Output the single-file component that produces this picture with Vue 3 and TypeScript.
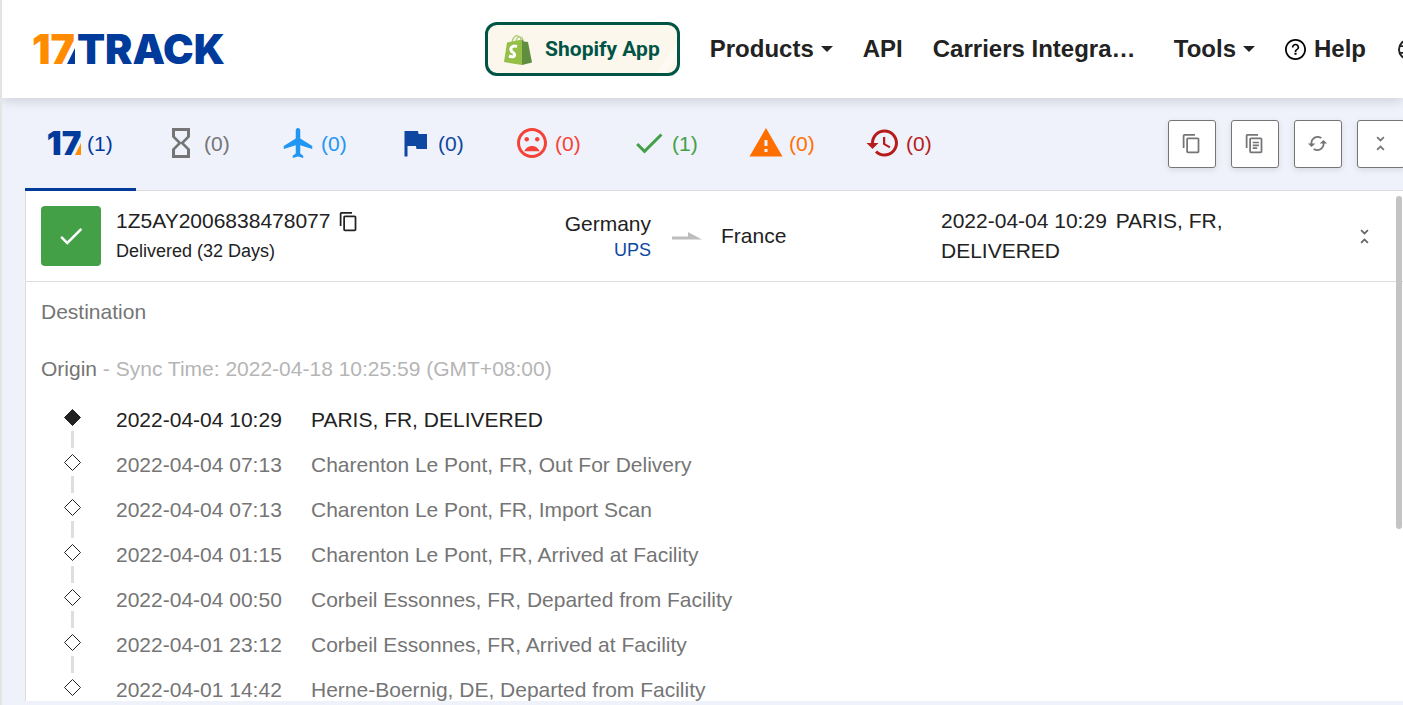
<script setup lang="ts">
interface Tab {
  label: string
  count: number
  color: string
  path?: string
}

interface TrackEvent {
  time: string
  text: string
}

const tabs: Tab[] = [
  { label: 'All', count: 1, color: 'navy' },
  { label: 'Not found', count: 0, color: 'grey', path: 'M6 2v6h.01L6 8.01 10 12l-4 4 .01.01H6V22h12v-5.99h-.01L18 16l-4-4 4-3.99-.01-.01H18V2H6zm10 14.5V20H8v-3.5l4-4 4 4zm-4-5-4-4V4h8v3.500l-4 4z' },
  { label: 'In transit', count: 0, color: 'sky', path: 'M21.500 16v-2l-8-5V3.500c0-.83-.67-1.500-1.500-1.500s-1.500.67-1.500 1.500V9l-8 5v2l8-2.500V19l-2 1.500V22l3.500-1 3.500 1v-1.500L13.500 19v-5.500l8 2.500z' },
  { label: 'Pick up', count: 0, color: 'blue', path: 'M14.400 6 14 4H5v17h2v-7h5.600l.4 2h7V6z' },
  { label: 'Undelivered', count: 0, color: 'red', path: 'M11.990 2C6.470 2 2 6.480 2 12s4.470 10 9.990 10C17.520 22 22 17.520 22 12S17.520 2 11.990 2zM12 20c-4.420 0-8-3.580-8-8s3.580-8 8-8 8 3.580 8 8-3.580 8-8 8zm3.500-9c.83 0 1.500-.67 1.500-1.500S16.330 8 15.500 8 14 8.670 14 9.500s.67 1.500 1.500 1.500zm-7 0c.83 0 1.500-.67 1.500-1.500S9.330 8 8.500 8 7 8.670 7 9.500 7.670 11 8.500 11zm3.500 3c-2.330 0-4.310 1.460-5.110 3.500h10.220c-.8-2.040-2.780-3.500-5.110-3.500z' },
  { label: 'Delivered', count: 1, color: 'green', path: 'M9 16.170 4.830 12l-1.420 1.410L9 19 21 7l-1.410-1.410z' },
  { label: 'Alert', count: 0, color: 'orange', path: 'M1 21h22L12 2 1 21zm12-3h-2v-2h2v2zm0-4h-2v-4h2v4z' },
  { label: 'Expired', count: 0, color: 'crimson', path: 'M13 3c-4.970 0-9 4.030-9 9H1l3.890 3.890.07.14L9 12H6c0-3.870 3.130-7 7-7s7 3.130 7 7-3.130 7-7 7c-1.930 0-3.680-.79-4.940-2.060l-1.420 1.420C8.270 19.990 10.510 21 13 21c4.970 0 9-4.030 9-9s-4.030-9-9-9zm-1 5v5l4.280 2.540.72-1.210-3.500-2.080V8H12z' },
]

const copyPath = 'M16 1H4c-1.1 0-2 .9-2 2v14h2V3h12V1zm3 4H8c-1.1 0-2 .9-2 2v14c0 1.1.9 2 2 2h11c1.1 0 2-.9 2-2V7c0-1.1-.9-2-2-2zm0 16H8V7h11v14z'
const foldPath = 'M7.41 18.59 8.83 20 12 16.83 15.17 20l1.41-1.41L12 14l-4.59 4.59zm9.18-13.18L15.17 4 12 7.170 8.830 4 7.410 5.410 12 10l4.590-4.590z'

const tools = [
  { label: 'Copy numbers', path: copyPath },
  { label: 'Copy details', path: copyPath + 'M10 10h7v1.800h-7zM10 13.200h7v1.800h-7zM10 16.400h5v1.800h-5z' },
  { label: 'Refresh', path: 'M12 3.500c1.900 0 3.600.6 5 1.700l-1.500 1.500A6 6 0 0 0 6.100 12H9.500L5.200 16 1 12h3C4 7.300 7.600 3.500 12 3.500zM18.800 8l4.200 4h-3c0 4.700-3.600 8.500-8 8.500-1.900 0-3.600-.6-5-1.700l1.500-1.500A6 6 0 0 0 17.900 12h-3.400z' },
  { label: 'Collapse all', path: foldPath },
]

const events: TrackEvent[] = [
  { time: '2022-04-04 10:29', text: 'PARIS, FR, DELIVERED' },
  { time: '2022-04-04 07:13', text: 'Charenton Le Pont, FR, Out For Delivery' },
  { time: '2022-04-04 07:13', text: 'Charenton Le Pont, FR, Import Scan' },
  { time: '2022-04-04 01:15', text: 'Charenton Le Pont, FR, Arrived at Facility' },
  { time: '2022-04-04 00:50', text: 'Corbeil Essonnes, FR, Departed from Facility' },
  { time: '2022-04-01 23:12', text: 'Corbeil Essonnes, FR, Arrived at Facility' },
  { time: '2022-04-01 14:42', text: 'Herne-Boernig, DE, Departed from Facility' },
]
</script>

<template>
  <div class="app">
    <header class="header">
      <a class="logo" href="#" aria-label="17TRACK">
        <span class="logo-num">17</span><svg class="logo-cut" viewBox="0 0 10 20" aria-hidden="true"><path d="M0 20 10 0V20z" /></svg><span class="logo-word">TRACK</span>
      </a>
      <nav class="nav">
        <a class="shopify" href="#">
          <svg class="bag" viewBox="0 0 28 31" aria-hidden="true">
            <path d="M8 8C9 3 12 1 14 2c2 0 3 3 3 6M12 8c0-3 2-6 4-5 2 0 3 2 3 4" fill="none" stroke="#a9c977" stroke-width="1.200" />
            <path d="M3 8.500 18 5.500V31L0 28z" fill="#95bf47" />
            <path d="M18 5.500 20 7.500 24 8 28 28.500 18 31z" fill="#5e8e3e" />
            <path d="M13 12.500C7 10.500 5 16 9 18.500c3 2 2 6-4 3.500" fill="none" stroke="#fff" stroke-width="3" />
          </svg>
          <span>Shopify App</span>
          <svg class="shine" viewBox="0 0 26 36" aria-hidden="true"><path d="M0 36 26 0V10L9 36z" /></svg>
        </a>
        <button class="nav-item" type="button">Products<svg class="caret" viewBox="0 0 12 6"><path d="M0 0h12L6 6z" /></svg></button>
        <a class="nav-item" href="#">API</a>
        <a class="nav-item carriers" href="#">Carriers Integration</a>
        <button class="nav-item" type="button">Tools<svg class="caret" viewBox="0 0 12 6"><path d="M0 0h12L6 6z" /></svg></button>
        <a class="nav-item help" href="#">
          <svg class="round" viewBox="2 2 20 20"><path d="M11 17h2v-2h-2v2zm1-15C6.480 2 2 6.480 2 12s4.480 10 10 10 10-4.480 10-10S17.520 2 12 2zm0 18.300c-4.580 0-8.300-3.720-8.300-8.300S7.420 3.700 12 3.700s8.300 3.720 8.300 8.300-3.720 8.300-8.300 8.300zM12 6.500c-1.900 0-3.500 1.500-3.500 3.500h1.600c0-1.100.9-2 1.900-2s1.900.9 1.900 2c0 1.700-2.700 1.500-2.700 4.300h1.600c0-1.900 2.700-2.200 2.700-4.300 0-2-1.600-3.500-3.500-3.500z" /></svg>Help
        </a>
        <button class="nav-item" type="button" aria-label="Language">
          <svg class="round" viewBox="0 0 22 22" fill="none" stroke="#222" stroke-width="2"><circle cx="11" cy="11" r="10" /><ellipse cx="11" cy="11" rx="4" ry="10" /><path d="M2 7.500h18M2 14.500h18" /></svg>
        </button>
      </nav>
    </header>

    <div class="bar">
      <div class="tabs" role="tablist">
        <button v-for="(tab, i) in tabs" :key="tab.label" class="tab" :class="[tab.color, { active: i === 0 }]" type="button" role="tab" :aria-selected="i === 0" :aria-label="tab.label">
          <svg v-if="tab.path" class="tab-icon" viewBox="0 0 24 24"><path :d="tab.path" /></svg>
          <span v-else class="mini"><span>17</span><svg class="mini-cut" viewBox="0 0 6 12"><path d="M0 12 6 0V12z" /></svg></span>
          <span class="count">({{ tab.count }})</span>
        </button>
      </div>
      <div class="tools">
        <button v-for="tool in tools" :key="tool.label" class="tool" type="button" :aria-label="tool.label">
          <svg class="icon" viewBox="0 0 24 24"><path :d="tool.path" /></svg>
        </button>
      </div>
    </div>

    <main class="panel">
      <section class="summary">
        <div class="status"><svg class="status-icon" viewBox="0 0 24 24"><path :d="tabs[5].path" /></svg></div>
        <div class="ident">
          <div class="number">1Z5AY2006838478077<button class="plain" type="button" aria-label="Copy number"><svg class="icon" viewBox="0 0 24 24"><path :d="copyPath" /></svg></button></div>
          <div class="state">Delivered (32 Days)</div>
        </div>
        <div class="origin">
          <div>Germany</div>
          <a href="#">UPS</a>
        </div>
        <svg class="arrow" viewBox="0 0 30 8" aria-hidden="true"><path d="M0 4.500H16V0L30 7.500H0z" /></svg>
        <div>France</div>
        <div class="latest"><time>2022-04-04 10:29</time> PARIS, FR, DELIVERED</div>
        <button class="plain fold" type="button" aria-label="Collapse"><svg class="icon" viewBox="0 0 24 24"><path :d="foldPath" /></svg></button>
      </section>
      <section class="details">
        <h2 class="place">Destination</h2>
        <h2 class="place">Origin<span> - Sync Time: 2022-04-18 10:25:59 (GMT+08:00)</span></h2>
        <ol class="events">
          <li v-for="(event, i) in events" :key="i" class="event" :class="{ current: i === 0 }">
            <svg class="mark" viewBox="0 0 17 45" aria-hidden="true">
              <path class="diamond" d="M8.500 12.500 16.500 20.500 8.500 28.500.5 20.500z" />
              <path class="link" d="M7 34h3v11H7zM7 0h3v6H7z" />
            </svg>
            <time>{{ event.time }}</time>
            <span>{{ event.text }}</span>
          </li>
        </ol>
      </section>
      <div class="scroll" />
    </main>
  </div>
</template>

<style>
body {
  margin: 0;
  background: #eff2fb;
}
</style>

<style scoped>
* {
  box-sizing: border-box;
}

.app {
  display: flex;
  flex-direction: column;
  height: 100vh;
  overflow: hidden;
  padding-bottom: 4px;
  border-left: 2px solid #e4e4e4;
  background: #eff2fb;
  color: #222;
  font: 21px/30px "Liberation Sans", Arial, sans-serif;
}

a {
  color: inherit;
  text-decoration: none;
}

button {
  padding: 0;
  border: 0;
  background: none;
  color: inherit;
  font: inherit;
}

svg {
  display: block;
  flex: none;
}

.header {
  position: relative;
  display: flex;
  align-items: center;
  justify-content: space-between;
  flex: none;
  height: 98px;
  padding-left: 30px;
  background: #fff;
  box-shadow: 0 2px 12px rgba(0, 0, 0, 0.16);
}

.logo {
  display: flex;
  align-items: center;
  color: #003a9b;
  font: 900 41px/44px Inter, sans-serif;
}

.logo-num {
  color: #ff8c00;
}

.logo-cut {
  width: 8px;
  height: 16px;
  margin: 14px 2px 0 -8px;
  fill: #003a9b;
}

.nav {
  display: flex;
  align-items: center;
  gap: 30px;
  margin-right: -16px;
}

.shopify {
  position: relative;
  display: flex;
  align-items: center;
  gap: 13px;
  height: 54px;
  padding: 0 17px 0 16px;
  overflow: hidden;
  border: 3px solid #005446;
  border-radius: 12px;
  background: #fbf7ec;
  color: #005446;
  font: 700 21px/30px Roboto, sans-serif;
}

.bag {
  width: 28px;
  height: 31px;
}

.shine {
  position: absolute;
  right: -3px;
  bottom: -3px;
  width: 26px;
  height: 36px;
  fill: rgba(255, 255, 255, 0.45);
}

.nav-item {
  display: flex;
  align-items: center;
  font-size: 24px;
  font-weight: 700;
}

.caret {
  width: 12px;
  height: 6px;
  margin-left: 7px;
  fill: #222;
}

.carriers {
  display: block;
  width: 209px;
  margin-right: 2px;
  overflow: hidden;
  text-overflow: ellipsis;
  white-space: nowrap;
}

.help {
  gap: 8px;
  margin-right: 2px;
}

.round {
  width: 21px;
  height: 21px;
}

.bar {
  display: flex;
  justify-content: space-between;
  flex: none;
  height: 93px;
  margin-left: 23px;
  border-bottom: 1px solid #dcdde2;
}

.tabs {
  display: flex;
  gap: 6px;
}

.tab {
  display: flex;
  align-items: center;
  gap: 5px;
  width: 111px;
  height: 93px;
  padding: 0 0 1px 21px;
  border-bottom: 3px solid transparent;
}

.tab.active {
  border-color: #003a9b;
}

.tab-icon {
  width: 36px;
  height: 36px;
  fill: currentColor;
}

.count {
  padding-top: 2px;
}

.mini {
  display: flex;
  align-items: center;
  justify-content: center;
  width: 36px;
  font: 900 33px/36px Inter, sans-serif;
}

.mini-cut {
  width: 6px;
  height: 12px;
  margin: 12px 0 0 -6px;
  fill: #ff8c00;
}

.navy { color: #003a9b; }
.grey { color: #757575; }
.sky { color: #2196f3; }
.blue { color: #0d47a1; }
.red { color: #f44336; }
.green { color: #43a047; }
.orange { color: #ff6f00; }
.crimson { color: #b71c1c; }

.tools {
  display: flex;
  gap: 15px;
  padding-top: 22px;
  margin-right: -2px;
}

.tool {
  display: grid;
  place-items: center;
  width: 48px;
  height: 48px;
  padding: 0 2px 2px 0;
  border: 1px solid #757575;
  border-radius: 3px;
  background: #fff;
  box-shadow: 0 2px 6px rgba(0, 0, 0, 0.1);
  color: #757575;
}

.icon {
  width: 21px;
  height: 21px;
  fill: currentColor;
}

.panel {
  position: relative;
  flex: 1;
  min-height: 0;
  margin-left: 23px;
  overflow: hidden;
  border-left: 1px solid #dcdde2;
  background: #fff;
}

.summary {
  display: grid;
  grid-template-columns: 75px minmax(0, 390fr) minmax(0, 145fr) 70px minmax(0, 220fr) minmax(0, 330fr) minmax(0, 132fr);
  align-items: center;
  padding: 15px 0 15px 15px;
  border-bottom: 1px solid #dcdcdc;
}

.status {
  display: grid;
  place-items: center;
  width: 60px;
  height: 60px;
  border-radius: 4px;
  background: #43a047;
}

.status-icon {
  width: 30px;
  height: 30px;
  fill: #fff;
}

.number {
  display: flex;
  align-items: center;
  gap: 8px;
}

.state {
  font-size: 18px;
}

.origin {
  padding-top: 2px;
  line-height: 27px;
  text-align: right;
}

.origin a {
  display: block;
  color: #0d47a1;
  font-size: 18px;
}

.arrow {
  width: 30px;
  height: 8px;
  margin-left: 21px;
  fill: #bdbdbd;
}

.latest time {
  margin-right: 3px;
}

.fold {
  justify-self: end;
  margin-right: 28px;
  color: #666;
}

.details {
  padding: 15px;
  color: #757575;
}

.place {
  margin: 0 0 27px;
  font-size: 21px;
  font-weight: 400;
}

.place + .place {
  margin-bottom: 13px;
}

.place span {
  color: #b5b5b5;
}

.events {
  margin: 0;
  padding: 0;
  list-style: none;
}

.event {
  display: flex;
  align-items: center;
  height: 45px;
  padding-left: 23px;
}

.mark {
  width: 17px;
  height: 45px;
  margin-right: 35px;
}

.event time {
  width: 195px;
}

.diamond {
  fill: #fff;
  stroke: #222;
}

.link {
  fill: #dedede;
}

.current {
  color: #222;
}

.current .diamond {
  fill: #222;
}

.current .link {
  clip-path: inset(20px 0 0 0);
}

.scroll {
  position: absolute;
  top: 5px;
  right: 1px;
  width: 6px;
  height: 333px;
  border-radius: 3px;
  background: #c4c4c4;
}
</style>
